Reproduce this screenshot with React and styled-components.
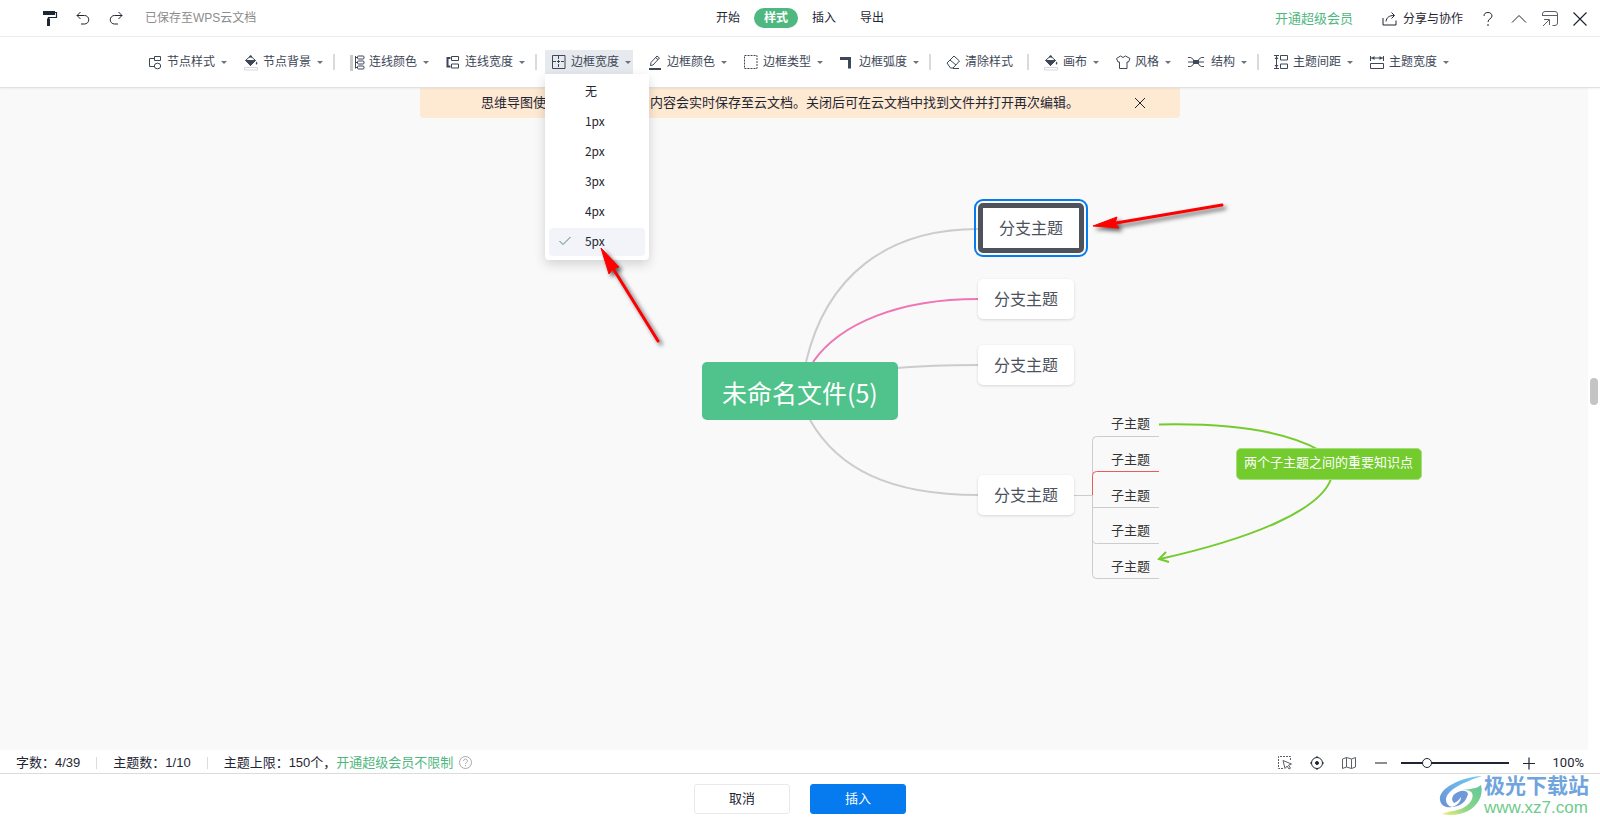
import { useState } from 'react';
import styled, { createGlobalStyle, css } from 'styled-components';

const GlobalStyle = createGlobalStyle`
  * {
    box-sizing: border-box;
  }

  body {
    margin: 0;
    background: #fff;
    color: #1f2633;
    font-family: "Liberation Sans", "Noto Sans CJK SC", sans-serif;
    font-size: 12px;
    line-height: 20px;
  }

  button {
    padding: 0;
    border: 0;
    background: none;
    color: inherit;
    font: inherit;
    white-space: nowrap;
    cursor: pointer;
  }

  a {
    color: #4fb780;
    font-size: 13px;
    text-decoration: none;
  }

  svg {
    display: block;
    flex: none;
    overflow: visible;
  }
`

const Page = styled.div`
  display: flex;
  flex-direction: column;
  min-height: 100vh;
  position: relative;
`

const Header = styled.header`
  display: grid;
  grid-template-columns: 1fr auto 1fr;
  align-items: center;
  height: 37px;
  border-bottom: 1px solid #ececec;
`

const HeaderLeft = styled.div`
  display: flex;
  align-items: center;
  gap: 19px;
  padding-left: 43px;
`

const SaveState = styled.span`
  margin-left: 3px;
  color: #8c8c8c;
`

const Tabs = styled.nav`
  display: flex;
  gap: 4px;
`

const Tab = styled.button`
  height: 20px;
  padding: 0 10px;
  border-radius: 10px;
  ${({ $active }) => $active && css`
    background: #4fb780;
    color: #fff;
    font-weight: 700;
  `}
`

const HeaderRight = styled.div`
  display: flex;
  align-items: center;
  justify-content: flex-end;
  gap: 15px;
  padding: 2px 13px 0 0;
`

const ShareButton = styled.button`
  display: flex;
  align-items: center;
  gap: 5px;
  margin: 0 2px 0 14px;
`

const Toolbar = styled.div`
  display: flex;
  align-items: center;
  justify-content: center;
  gap: 8px;
  height: 51px;
  padding-right: 8px;
  border-bottom: 1px solid #dfe1e4;
  box-shadow: 0 1px 2px rgba(0, 0, 0, 0.05);
  background: #fff;
  position: relative;
  z-index: 2;
`

const ToolWrap = styled.div`
  position: relative;
`

const ToolButton = styled.button`
  display: flex;
  align-items: center;
  gap: 5px;
  height: 24px;
  padding: 0 ${({ $plain }) => ($plain ? 6 : 2)}px 0 7px;
  background: ${({ $open }) => ($open ? '#e6e9ed' : 'transparent')};
  color: #3d4757;
`

const Caret = styled.span`
  margin-left: 1px;
  border: 3px solid transparent;
  border-top-color: #6b7380;
  border-bottom: 0;
`

const ToolDivider = styled.span`
  width: 2px;
  height: 16px;
  background: #d8dadd;
`

const Menu = styled.div`
  display: flex;
  flex-direction: column;
  gap: 2px;
  position: absolute;
  top: 100%;
  left: 0;
  width: 104px;
  padding: 4px;
  border-radius: 0 0 4px 4px;
  background: #fff;
  box-shadow: 0 4px 12px rgba(0, 0, 0, 0.16);
`

const MenuItem = styled.button`
  display: grid;
  grid-template-columns: 12px 1fr;
  align-items: center;
  gap: 14px;
  height: 28px;
  padding: 0 10px 2px;
  border-radius: 4px;
  background: ${({ $checked }) => ($checked ? '#f2f4f9' : 'transparent')};
  font-family: "Noto Sans CJK SC", sans-serif;
  text-align: left;
`

const Workspace = styled.main`
  flex: 1;
  min-height: 520px;
  overflow: hidden;
  background: #f9f9f9;
  position: relative;
`

const Notice = styled.div`
  display: flex;
  align-items: center;
  justify-content: space-between;
  width: 760px;
  height: 30px;
  margin: 0 auto;
  padding: 0 34px 1px 61px;
  border-radius: 0 0 4px 4px;
  background: #fee9d2;
  font-size: 13px;
`

const NoticeText = styled.p`
  display: flex;
  gap: 104px;
  margin: 0;
  white-space: nowrap;
`

const ScrollTrack = styled.div`
  display: flex;
  align-items: center;
  justify-content: center;
  width: 12px;
  background: #fff;
  position: absolute;
  top: 0;
  right: 0;
  bottom: 0;
`

const ScrollThumb = styled.div`
  width: 8px;
  height: 27px;
  margin-bottom: 56px;
  border-radius: 4px;
  background: #c4c4c4;
`

const Board = styled.div`
  position: absolute;
  top: 0;
  left: calc(50% - 800px);
`

const Links = styled.svg`
  position: absolute;
  top: 0;
  left: 0;
  fill: none;
  stroke: #cccccc;
`

const Node = styled.div`
  position: absolute;
  top: ${({ $y }) => $y}px;
  left: ${({ $x }) => $x}px;
  white-space: nowrap;
`

const RootNode = styled(Node)`
  padding: 12px 20px 10px;
  border-radius: 5px;
  background: #50c28b;
  color: #fff;
  font-family: "Noto Sans CJK SC", sans-serif;
  font-size: 25px;
  line-height: 36px;
`

const BranchNode = styled(Node)`
  padding: 9px 16px 7px;
  border-radius: 5px;
  background: #fff;
  box-shadow: 0 1px 3px rgba(0, 0, 0, 0.14);
  color: #4b525c;
  font-size: 16px;
  line-height: 24px;
  ${({ $selected }) => $selected && css`
    border: 5px solid #4e535b;
    outline: 2px solid #067bef;
    outline-offset: 2px;
    box-shadow: none;
  `}
`

const LeafNode = styled(Node)`
  color: #333;
  font-size: 13px;
`

const RelationLabel = styled(Node)`
  padding: 4px 8px 6px 7px;
  border: 1px solid #a5de7c;
  border-radius: 5px;
  background: #73cb2d;
  color: #fff;
  font-size: 13px;
`

const StatusBar = styled.div`
  display: flex;
  align-items: center;
  justify-content: space-between;
  height: 24px;
  padding: 2px 16px 0;
  border-bottom: 1px solid #dcdcdc;
  font-size: 13px;
`

const StatusGroup = styled.div`
  display: flex;
  align-items: center;
  gap: ${({ $gap }) => $gap}px;
`

const StatusDivider = styled.span`
  width: 1px;
  height: 12px;
  background: #dcdcdc;
`

const LimitText = styled.span`
  display: flex;
  align-items: center;
`

const HelpButton = styled.button`
  margin-left: 6px;
`

const ZoomSlider = styled.input`
  appearance: none;
  width: 108px;
  height: 12px;
  margin: 0;
  background: none;

  &::-webkit-slider-runnable-track {
    height: 2px;
    background: #1f2633;
  }

  &::-webkit-slider-thumb {
    appearance: none;
    width: 10px;
    height: 10px;
    margin-top: -4px;
    border: 1px solid #1f2633;
    border-radius: 50%;
    background: #fff;
  }
`

const ZoomValue = styled.span`
  margin-left: 4px;
  font-family: Roboto, sans-serif;
`

const Footer = styled.footer`
  display: flex;
  align-items: center;
  justify-content: center;
  gap: 20px;
  height: 50px;
`

const FooterButton = styled.button`
  width: 96px;
  height: 30px;
  border: 1px solid ${({ $primary }) => ($primary ? '#067bef' : '#e7e9ee')};
  border-radius: 3px;
  background: ${({ $primary }) => ($primary ? '#067bef' : '#fff')};
  color: ${({ $primary }) => ($primary ? '#fff' : '#1f2633')};
  font-size: 13px;
`

const Watermark = styled.div`
  display: flex;
  align-items: center;
  gap: 2px;
  position: absolute;
  right: 11px;
  bottom: 6px;
`

const WatermarkText = styled.div`
  display: flex;
  flex-direction: column;
`

const WatermarkName = styled.span`
  color: #70a4dd;
  font-size: 21px;
  font-weight: 700;
  line-height: 24px;
`

const WatermarkSite = styled.span`
  color: #6fcb8b;
  font-size: 17px;
  line-height: 20px;
`

const Icon = ({ width = 14, height = 14, children, ...rest }) => (
  <svg
    width={width}
    height={height}
    viewBox={`0 0 ${width} ${height}`}
    fill='none'
    stroke='currentColor'
    aria-hidden='true'
    {...rest}
  >
    {children}
  </svg>
)

const bucket = (
  <>
    <path d='M1.500 5.500 6.500 1l5 4.500-5 5z' />
    <path d='M1 5h11L6.500 11zM4.500 2.500 6 .5h1.500l1 2z' fill='currentColor' stroke='none' />
    <path d='M12.500 6.500c1 1.500 1.300 2.500.3 3s-1.500-1-.3-3z' fill='currentColor' stroke='none' />
    <path d='M.5 12.500h13v2.500H.5z' stroke='#d5d8dc' />
  </>
)

const icons = {
  nodeStyle: (
    <>
      <path d='M6.500 1.500h6v4h-6zM6 3.500H1.500v8H6' />
      <ellipse cx='9.500' cy='11' rx='3.200' ry='2.800' />
    </>
  ),
  bucket,
  lineColor: (
    <>
      <path d='M1.500 0v16' stroke='#c5cacb' strokeWidth='3' />
      <path d='M5.500 1v12.500M5.500 2.500h2M5.500 7.500h2M5.500 12.500h2' />
      <rect x='7.500' y='1' width='6.500' height='3' rx='1' />
      <rect x='7.500' y='6' width='6.500' height='3' rx='1' />
      <rect x='7.500' y='11' width='6.500' height='3' rx='1' />
    </>
  ),
  lineWidth: (
    <>
      <path d='M4.500 3H1.500v8.500h3' strokeWidth='2' />
      <path d='M5.500 1.500h7v4h-7zM5.500 9h7v4h-7z' />
    </>
  ),
  borderWidth: (
    <>
      <path d='M.5.500h12.500v13H.5z' />
      <path d='M6.500 1v12M1 6.500h12' strokeDasharray='3 1' />
    </>
  ),
  borderColor: (
    <>
      <path d='M2.500 10.500 3 7.500 9 1l2.500 2-6.500 7zM7.500 2.500l2.500 2' />
      <path d='M1 14h12' strokeWidth='2' />
    </>
  ),
  borderType: <path d='M.5.500h12.500v13H.5z' strokeDasharray='2 1' />,
  borderRadius: <path d='M0 3.500h9.500v10' strokeWidth='3' />,
  eraser: <path d='M1 8 8 1l5.500 5L7 13H4.500zM4 5l6 5M7 13.500h6' />,
  shirt: <path d='M4.500 1 .5 3.500 2 7h1.500v6.500h7.500V7h1.500L14 3.500 9.500 1Q7 4 4.500 1z' />,
  structure: (
    <>
      <path d='M0 2.500h2.500Q5 3 6 6h4q1-3 3.500-3.500H16M0 11.500h2.500Q5 11 6 8h4q1 3 3.500 3.500H16M0 7h16' />
      <path d='M5.500 5.500h5v3h-5z' fill='currentColor' />
    </>
  ),
  spacing: (
    <>
      <path d='M0 .5h5M0 13.500h5M2.500 1v12' />
      <path d='m.5 4 2-2.500 2 2.500zM.5 10l2 2.500 2-2.500z' fill='currentColor' stroke='none' />
      <path d='M6.500.500h7v4.500h-7zM6.500 9h7v4.500h-7z' />
    </>
  ),
  topicWidth: (
    <>
      <path d='M.5 1v5M13.500 1v5M1 3h12M.5 8.500h13v5H.5z' />
      <path d='M4.500 1v4l-3-2zM9.500 1v4l3-2z' fill='currentColor' stroke='none' />
    </>
  ),
}

const tools = [
  { label: '节点样式', icon: 'nodeStyle' },
  { label: '节点背景', icon: 'bucket' },
  null,
  { label: '连线颜色', icon: 'lineColor' },
  { label: '连线宽度', icon: 'lineWidth' },
  null,
  { label: '边框宽度', icon: 'borderWidth', menu: true },
  { label: '边框颜色', icon: 'borderColor' },
  { label: '边框类型', icon: 'borderType' },
  { label: '边框弧度', icon: 'borderRadius' },
  null,
  { label: '清除样式', icon: 'eraser', plain: true },
  null,
  { label: '画布', icon: 'bucket' },
  { label: '风格', icon: 'shirt' },
  { label: '结构', icon: 'structure', iconWidth: 18 },
  null,
  { label: '主题间距', icon: 'spacing' },
  { label: '主题宽度', icon: 'topicWidth' },
]

const borderWidths = ['无', '1px', '2px', '3px', '4px', '5px']

const branches = [
  { y: 115, selected: true },
  { y: 191 },
  { y: 257 },
  { y: 387 },
]

const leaves = [326, 362, 398, 433, 469]

const WidthMenu = ({ value, onChange }) => (
  <Menu role='menu'>
    {borderWidths.map((width) => (
      <MenuItem
        key={width}
        role='menuitemradio'
        aria-checked={width === value}
        $checked={width === value}
        onClick={() => onChange(width)}
      >
        {width === value ? (
          <Icon width={12} height={10} stroke='#5b7a80'>
            <path d='M.5 5 4 8.500 11.500 1' />
          </Icon>
        ) : <span />}
        {width}
      </MenuItem>
    ))}
  </Menu>
)

const Tool = ({ label, icon, iconWidth, plain, open, onClick, children }) => (
  <ToolWrap>
    <ToolButton $plain={plain} $open={open} onClick={onClick}>
      <Icon width={iconWidth}>{icons[icon]}</Icon>
      {label}
      {!plain && <Caret />}
    </ToolButton>
    {children}
  </ToolWrap>
)

const TopBar = () => (
  <Header>
    <HeaderLeft>
      <button aria-label='格式刷'>
        <Icon height={16} stroke='#1f2633'>
          <path d='M0 1h12v4H0z' fill='#1f2633' stroke='none' />
          <path d='M12 2.500h1.500v5H5.500v2' strokeWidth='1.200' />
          <path d='M5.500 8.500V16' strokeWidth='3' />
        </Icon>
      </button>
      <button aria-label='撤销'>
        <Icon><path d='M4.500 1 1 4.500 4.500 8M1 4.500h7.500a4 4 0 0 1 0 8.500H5' /></Icon>
      </button>
      <button aria-label='重做'>
        <Icon><path d='M9.500 1 13 4.500 9.500 8M13 4.500H5.500a4 4 0 0 0 0 8.500H9' /></Icon>
      </button>
      <SaveState>已保存至WPS云文档</SaveState>
    </HeaderLeft>
    <Tabs>
      <Tab>开始</Tab>
      <Tab $active>样式</Tab>
      <Tab>插入</Tab>
      <Tab>导出</Tab>
    </Tabs>
    <HeaderRight>
      <a href='#vip'>开通超级会员</a>
      <ShareButton>
        <Icon width={16}>
          <path d='M1 6v7h13V8.500M4 9.500C4.500 5.500 7 3.500 12 3.500M9.500.500l3 3-3 3' />
        </Icon>
        分享与协作
      </ShareButton>
      <button aria-label='帮助'>
        <Icon width={16} height={16}>
          <path d='M4 5C4 2.500 5.500 1.500 8 1.500s4 1.500 4 3.500C12 8 8 7.500 8 11M8 13v2' />
        </Icon>
      </button>
      <button aria-label='收起'>
        <Icon width={16} height={16}><path d='m1 11.500 7-7 7 7' /></Icon>
      </button>
      <button aria-label='还原窗口'>
        <Icon width={16} height={16} stroke='#5c6066'>
          <path d='M.5 5V3q0-2.500 2.500-2.500h10q2.500 0 2.500 2.500v9q0 2.500-2.500 2.500h-2.500M.5 4.500h15M1 15l6-6M2 8.500h5.500V14' />
        </Icon>
      </button>
      <button aria-label='关闭'>
        <Icon height={16}><path d='m.5 1.500 13 13M13.500 1.500l-13 13' strokeWidth='1.200' /></Icon>
      </button>
    </HeaderRight>
  </Header>
)

const MindMap = () => (
  <Board>
    <Links width='1600' height='662'>
      <g strokeWidth='2'>
        <path d='M806 274C826 189 886 141 978 141' />
        <path d='M813 274C840 235 900 211 978 211' stroke='#ee76b5' />
        <path d='M898 280Q930 277 978 277' />
        <path d='M810 332C838 381 890 407 978 407' />
      </g>
      <path d='M1074 407.500H1092M1159 348.500H1096.500Q1092.500 348.500 1092.500 352.500V486.500Q1092.500 490.500 1096.500 490.500H1159' />
      <path d='M1092.500 419.500H1159M1092.500 451Q1092.500 455.500 1096.500 455.500H1159' />
      <path d='M1092.500 407V387.500Q1092.500 383.500 1096.500 383.500H1159' stroke='#ec5a5a' />
      <g stroke='#73cb2d' strokeWidth='2'>
        <path d='M1159 336.500C1230 335 1285 343 1319 362' />
        <path d='M1331 391C1320 421 1258 449 1160 471' />
        <path d='M1166 464 1159 471 1169 474' />
      </g>
    </Links>
    <RootNode $x={702} $y={274}>未命名文件(5)</RootNode>
    {branches.map(({ y, selected }) => (
      <BranchNode key={y} $x={978} $y={y} $selected={selected}>分支主题</BranchNode>
    ))}
    {leaves.map((y) => (
      <LeafNode key={y} $x={1111} $y={y}>子主题</LeafNode>
    ))}
    <RelationLabel $x={1236} $y={360}>两个子主题之间的重要知识点</RelationLabel>
  </Board>
)

const PointerLayer = styled.svg`
  position: absolute;
  top: 0;
  left: calc(50% - 800px);
  z-index: 3;
  pointer-events: none;
  filter: drop-shadow(3px 3px 2px rgba(0, 0, 0, 0.6));
`

const Pointers = () => (
  <PointerLayer width='1600' height='360' aria-hidden='true' stroke='#fe0000' fill='#fe0000'>
    <path d='M614 270 658 341' strokeWidth='3' strokeLinecap='round' />
    <path d='M601 248 619 267 613 269 609 274z' strokeLinejoin='round' />
    <path d='M1116 223 1222 205' strokeWidth='3' strokeLinecap='round' />
    <path d='M1093 226 1117 217 1115 223 1119 228z' strokeLinejoin='round' />
  </PointerLayer>
)

const Status = () => {
  const [zoom, setZoom] = useState(22)

  return (
    <StatusBar>
      <StatusGroup $gap={16}>
        <span>字数：4/39</span>
        <StatusDivider />
        <span>主题数：1/10</span>
        <StatusDivider />
        <LimitText>
          主题上限：150个，
          <a href='#vip'>开通超级会员不限制</a>
          <HelpButton aria-label='说明'>
            <Icon stroke='#a6a9ae'>
              <circle cx='6.500' cy='6.500' r='6' />
              <path d='M4.500 5C4.500 2.500 8.500 2.500 8.500 5 8.500 6.500 6.500 6.500 6.500 8M6.500 9v1.200' />
            </Icon>
          </HelpButton>
        </LimitText>
      </StatusGroup>
      <StatusGroup $gap={13}>
        <StatusGroup $gap={18}>
          <button aria-label='框选'>
            <Icon stroke='#5c6066'>
              <path d='M12.500 4V.500H.5v12H5' strokeDasharray='2 1' />
              <path d='m5 4.500 8.500 3.500-3 1.200 2 3-1.500.8-2-3L7 12.500z' />
            </Icon>
          </button>
          <button aria-label='定位中心'>
            <Icon>
              <circle cx='7' cy='7' r='5.500' />
              <circle cx='7' cy='7' r='1.500' fill='currentColor' />
              <path d='M7 0v2M7 12v2M0 7h2M12 7h2' />
            </Icon>
          </button>
          <button aria-label='导航'>
            <Icon stroke='#5c6066'><path d='m.5 3 4-1.500 5 1.500 4-1.500V11l-4 1.500L4.500 11l-4 1.500zM4.500 1.500V11M9.500 3v9.500' /></Icon>
          </button>
          <button aria-label='缩小'>
            <Icon stroke='#8b8e92'><path d='M1 7h12' strokeWidth='2' /></Icon>
          </button>
        </StatusGroup>
        <ZoomSlider
          type='range'
          aria-label='缩放'
          value={zoom}
          onChange={(e) => setZoom(e.target.value)}
        />
        <button aria-label='放大'>
          <Icon><path d='M1 7.500h12M7 1.500v12' strokeWidth='1.200' /></Icon>
        </button>
        <ZoomValue>100%</ZoomValue>
      </StatusGroup>
    </StatusBar>
  )
}

const Brand = () => (
  <Watermark>
    <svg width='42' height='40' viewBox='0 0 42 40' aria-hidden='true'>
      <defs>
        <linearGradient id='swirlBlue' x1='0' y1='1' x2='1' y2='0'>
          <stop offset='0' stopColor='#6a8fd6' />
          <stop offset='1' stopColor='#6fd0f2' />
        </linearGradient>
        <linearGradient id='swirlGreen' x1='0' y1='1' x2='1' y2='0'>
          <stop offset='0' stopColor='#eef07a' />
          <stop offset='0.4' stopColor='#8fd68a' />
          <stop offset='1' stopColor='#5fc79a' />
        </linearGradient>
      </defs>
      <path
        d='M42 0C22 1-2 12 0 24c1 6 6 8 12 7-4-1-6-4-6-7C6 14 24 6 42 0z'
        fill='url(#swirlBlue)'
      />
      <path
        d='M11 31c9 0 15-5 17-13-1-4-6-4-10-2-5 2-8 7-4 11 3-1 5-3 7-6 0 5-4 9-10 10z'
        fill='#6d98da'
      />
      <path
        d='M23 14c8-1 15-2 18-5 3 11-4 21-13 26-8 4-18 5-26 3 7-3 15-3 21-6 8-4 11-11 9-15-2-3-6-3-9-3z'
        fill='url(#swirlGreen)'
      />
    </svg>
    <WatermarkText>
      <WatermarkName>极光下载站</WatermarkName>
      <WatermarkSite>www.xz7.com</WatermarkSite>
    </WatermarkText>
  </Watermark>
)

export default function App() {
  const [borderWidth, setBorderWidth] = useState('5px')
  const [menuOpen, setMenuOpen] = useState(true)

  return (
    <Page>
      <GlobalStyle />
      <TopBar />
      <Toolbar>
        {tools.map((tool, i) => (tool ? (
          <Tool
            key={i}
            {...tool}
            open={tool.menu && menuOpen}
            onClick={tool.menu ? () => setMenuOpen(!menuOpen) : undefined}
          >
            {tool.menu && menuOpen && (
              <WidthMenu value={borderWidth} onChange={setBorderWidth} />
            )}
          </Tool>
        ) : <ToolDivider key={i} />))}
      </Toolbar>
      <Workspace>
        <Notice>
          <NoticeText>
            <span>思维导图使</span>
            <span>内容会实时保存至云文档。关闭后可在云文档中找到文件并打开再次编辑。</span>
          </NoticeText>
          <button aria-label='关闭提示'>
            <Icon width={12} height={12}><path d='m1 1 10 10M11 1 1 11' /></Icon>
          </button>
        </Notice>
        <MindMap />
        <ScrollTrack>
          <ScrollThumb />
        </ScrollTrack>
      </Workspace>
      <Status />
      <Footer>
        <FooterButton>取消</FooterButton>
        <FooterButton $primary>插入</FooterButton>
      </Footer>
      <Brand />
      <Pointers />
    </Page>
  )
}
